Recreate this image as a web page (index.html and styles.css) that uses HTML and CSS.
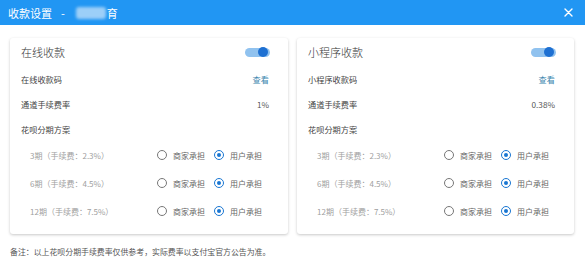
FILE: index.html
```html
<!DOCTYPE html>
<html>

<head>
	<title>收款设置</title>
	<link rel="stylesheet" href="styles.css">
</head>

<body>
	<div class="header">
		<span class="header-title">收款设置 <span class="dash">-</span> <span class="blur"></span>育</span>
		<svg class="close" width="9" height="9" viewBox="0 0 9 9">
			<path d="M1 1 L8 8 M8 1 L1 8" stroke="#fff" stroke-width="1.4" stroke-linecap="round" />
		</svg>
	</div>

	<div class="container">
		<div class="cards">
			<div class="card">
				<div class="card-title">
					<span>在线收款</span>
					<span class="switch"><span class="knob"></span></span>
				</div>
				<div class="row"><span>在线收款码</span><a class="link">查看</a></div>
				<div class="row"><span>通道手续费率</span><span class="value">1%</span></div>
				<div class="row"><span>花呗分期方案</span></div>
				<div class="period">
					<span class="period-label">3期（手续费：2.3%）</span>
					<span class="radio"><span class="dot"></span>商家承担</span>
					<span class="radio"><span class="dot checked"></span>用户承担</span>
				</div>
				<div class="period">
					<span class="period-label">6期（手续费：4.5%）</span>
					<span class="radio"><span class="dot"></span>商家承担</span>
					<span class="radio"><span class="dot checked"></span>用户承担</span>
				</div>
				<div class="period">
					<span class="period-label">12期（手续费：7.5%）</span>
					<span class="radio"><span class="dot"></span>商家承担</span>
					<span class="radio"><span class="dot checked"></span>用户承担</span>
				</div>
			</div>

			<div class="card">
				<div class="card-title">
					<span>小程序收款</span>
					<span class="switch"><span class="knob"></span></span>
				</div>
				<div class="row"><span>小程序收款码</span><a class="link">查看</a></div>
				<div class="row"><span>通道手续费率</span><span class="value">0.38%</span></div>
				<div class="row"><span>花呗分期方案</span></div>
				<div class="period">
					<span class="period-label">3期（手续费：2.3%）</span>
					<span class="radio"><span class="dot"></span>商家承担</span>
					<span class="radio"><span class="dot checked"></span>用户承担</span>
				</div>
				<div class="period">
					<span class="period-label">6期（手续费：4.5%）</span>
					<span class="radio"><span class="dot"></span>商家承担</span>
					<span class="radio"><span class="dot checked"></span>用户承担</span>
				</div>
				<div class="period">
					<span class="period-label">12期（手续费：7.5%）</span>
					<span class="radio"><span class="dot"></span>商家承担</span>
					<span class="radio"><span class="dot checked"></span>用户承担</span>
				</div>
			</div>
		</div>

		<p class="note">备注：以上花呗分期手续费率仅供参考，实际费率以支付宝官方公告为准。</p>
	</div>
</body>

</html>
```

FILE: styles.css
```css
body {
	background-color: #fff;
	color: #333;
	font-family: "Noto Sans CJK SC", "Liberation Sans", sans-serif;
	margin: 0;
	padding: 0;
}

.header {
	background-color: #2196f3;
	height: 25px;
	display: flex;
	align-items: center;
	justify-content: space-between;
	padding: 0 12px 0 8px;
	color: #fff;
}

.header-title {
	font-size: 11px;
	display: flex;
	align-items: center;
}

.dash {
	margin: 0 10px 0 9px;
}

.blur {
	display: inline-block;
	width: 30px;
	height: 12px;
	margin-left: 1px;
	margin-right: 1px;
	background-color: #9ccff8;
	border-radius: 3px;
	filter: blur(1.5px);
}

.container {
	padding: 13px 11px 0 10px;
}

.cards {
	display: grid;
	grid-template-columns: 278px 277px;
	gap: 9px;
}

.card {
	background-color: #fff;
	border-radius: 3px;
	box-shadow: 0 1px 3px rgba(0, 0, 0, 0.22);
	padding: 0 18px 9px 11px;
}

.card-title {
	height: 28px;
	display: flex;
	align-items: center;
	justify-content: space-between;
	font-size: 11px;
	font-weight: 300;
	color: #333;
}

.switch {
	position: relative;
	width: 25px;
	height: 9px;
	border-radius: 5px;
	background-color: #90c2ef;
}

.knob {
	position: absolute;
	right: 2px;
	top: -0.5px;
	width: 10px;
	height: 10px;
	border-radius: 50%;
	background-color: #1e70d2;
}

.row {
	height: 25px;
	display: flex;
	align-items: center;
	justify-content: space-between;
	font-size: 8.2px;
	color: #444;
}

.link {
	color: #3f88b0;
	margin-right: 1px;
}

.value {
	color: #555;
	font-size: 8.2px;
	margin-right: 1px;
}

.period {
	height: 28px;
	display: grid;
	grid-template-columns: 127px 57px auto;
	align-items: center;
	padding-left: 9px;
	font-size: 8px;
}

.period-label {
	color: #a0a0a0;
}

.radio {
	display: flex;
	align-items: center;
	gap: 6px;
	color: #666;
}

.dot {
	position: relative;
	width: 8px;
	height: 8px;
	border: 1px solid #777;
	border-radius: 50%;
}

.dot.checked {
	border-color: #1976d2;
}

.dot.checked::after {
	content: "";
	position: absolute;
	left: 2px;
	top: 2px;
	width: 4px;
	height: 4px;
	border-radius: 50%;
	background-color: #1976d2;
}

.note {
	margin: 12px 0 0 0;
	font-size: 7.9px;
	color: #555;
}
```
